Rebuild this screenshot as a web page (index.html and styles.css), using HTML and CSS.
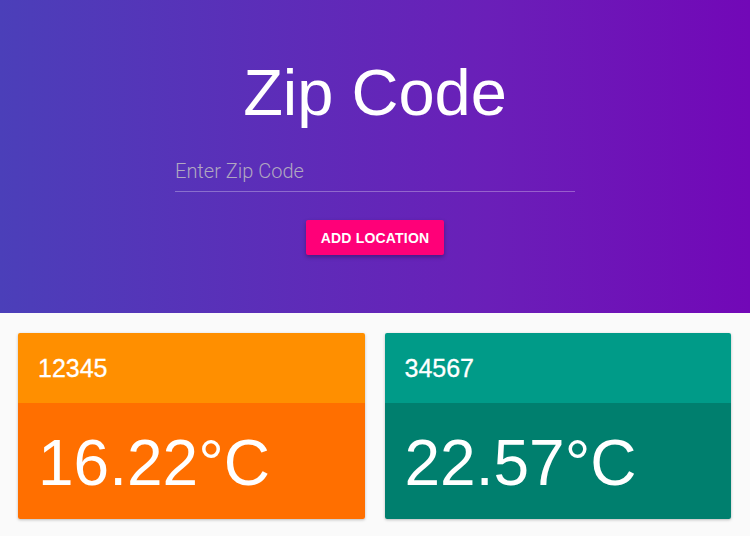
FILE: index.html
```html
<!DOCTYPE html>
<html>
<head>
<meta charset="utf-8">
<link rel="stylesheet" href="styles.css">
</head>
<body>
<header class="hero">
  <h1 class="title">Zip Code</h1>
  <div class="field"><input class="zip-input" type="text" placeholder="Enter Zip Code"></div>
  <button class="add-btn">ADD LOCATION</button>
</header>
<main class="cards">
  <section class="card card-orange">
    <div class="card-head">12345</div>
    <div class="card-body">16.22°C</div>
  </section>
  <section class="card card-teal">
    <div class="card-head">34567</div>
    <div class="card-body">22.57°C</div>
  </section>
</main>
</body>
</html>
```
FILE: styles.css
```css
html, body { margin: 0; padding: 0; }
body {
  background: #fafafa;
  font-family: "Liberation Sans", Arial, sans-serif;
  width: 750px;
  height: 536px;
  overflow: hidden;
}
.hero {
  height: 313px;
  box-sizing: border-box;
  background: linear-gradient(90deg, #4b3fb9 0%, #6a1fb8 65%, #7208b7 100%);
  display: flex;
  flex-direction: column;
  align-items: center;
  padding-top: 55px;
}
.title {
  margin: 0;
  color: #fff;
  font-weight: 400;
  font-size: 65px;
  line-height: 76px;
}
.field {
  margin-top: 19px;
  width: 400px;
  border-bottom: 1px solid rgba(255,255,255,0.3);
}
.zip-input {
  width: 100%;
  box-sizing: border-box;
  border: 0;
  background: transparent;
  padding: 0;
  height: 41px;
  font-family: Roboto, sans-serif;
  font-weight: 300;
  font-size: 20px;
  color: #fff;
  outline: none;
}
.zip-input::placeholder { color: #b0a8c0; }
.add-btn {
  margin-top: 28px;
  width: 138px;
  height: 35px;
  border: 0;
  border-radius: 2px;
  background: #ff0078;
  color: #fff;
  font-family: "Liberation Sans", Arial, sans-serif;
  font-weight: 700;
  font-size: 14px;
  letter-spacing: 0.2px;
  box-shadow: 0 2px 4px rgba(0,0,0,0.3);
}
.cards {
  display: flex;
  gap: 20px;
  padding: 20px 19px 0 18px;
}
.card {
  flex: 1;
  border-radius: 2px;
  overflow: hidden;
  box-shadow: 0 1px 3px rgba(0,0,0,0.25);
  color: #fff;
}
.card-head {
  height: 70px;
  box-sizing: border-box;
  padding: 20px 21px 0 20px;
  font-size: 25px;
  line-height: 30px;
  -webkit-text-stroke: 0.3px #fff;
}
.card-body {
  height: 116px;
  box-sizing: border-box;
  padding: 22px 21px 0 20px;
  font-size: 64px;
  line-height: 76px;
}
.card-orange .card-head { background: #ff8f00; }
.card-orange .card-body { background: #ff6f00; }
.card-teal .card-head { background: #009b88; }
.card-teal .card-body { background: #007f6e; }
```
